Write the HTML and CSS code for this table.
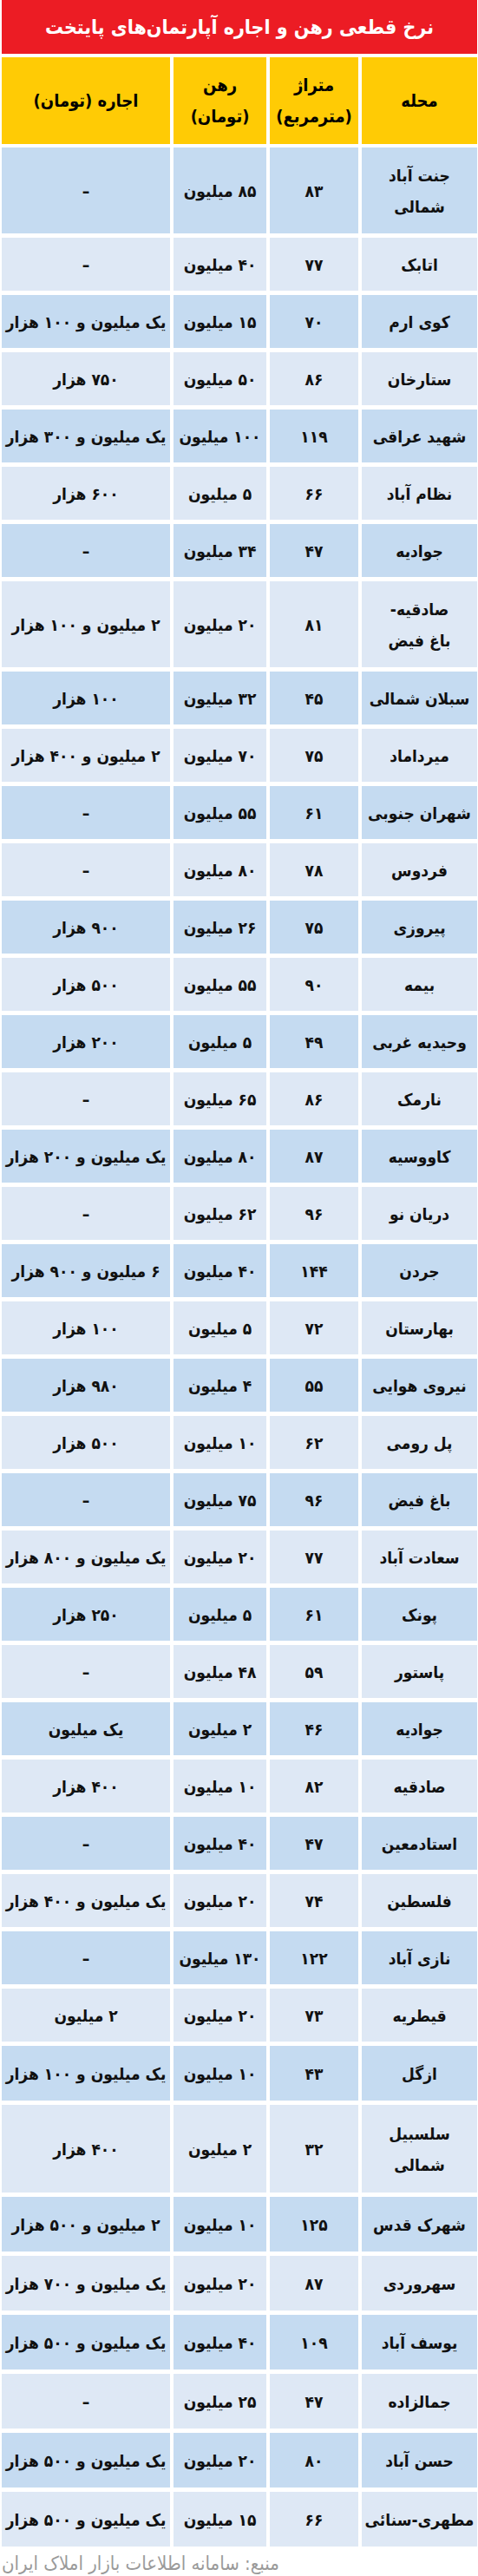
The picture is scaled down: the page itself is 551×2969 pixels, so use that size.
FILE: index.html
```html
<!DOCTYPE html>
<html lang="fa" dir="rtl">
<head>
<meta charset="utf-8">
<title>نرخ قطعی رهن و اجاره آپارتمان‌های پایتخت</title>
<link rel="stylesheet" href="styles.css">
</head>
<body>
<div class="page">
  <div class="title">نرخ قطعی رهن و اجاره آپارتمان&zwnj;های پایتخت</div>
  <div class="row head">
    <div class="cell">محله</div>
    <div class="cell">متراژ<br>(مترمربع)</div>
    <div class="cell">رهن<br>(تومان)</div>
    <div class="cell">اجاره (تومان)</div>
  </div>
  <div class="rows">
    <div class="row tall"><div class="cell">جنت آباد<br>شمالی</div><div class="cell">۸۳</div><div class="cell">۸۵ میلیون</div><div class="cell">–</div></div>
    <div class="row"><div class="cell">اتابک</div><div class="cell">۷۷</div><div class="cell">۴۰ میلیون</div><div class="cell">–</div></div>
    <div class="row"><div class="cell">کوی ارم</div><div class="cell">۷۰</div><div class="cell">۱۵ میلیون</div><div class="cell">یک میلیون و ۱۰۰ هزار</div></div>
    <div class="row"><div class="cell">ستارخان</div><div class="cell">۸۶</div><div class="cell">۵۰ میلیون</div><div class="cell">۷۵۰ هزار</div></div>
    <div class="row"><div class="cell">شهید عراقی</div><div class="cell">۱۱۹</div><div class="cell">۱۰۰ میلیون</div><div class="cell">یک میلیون و ۳۰۰ هزار</div></div>
    <div class="row"><div class="cell">نظام آباد</div><div class="cell">۶۶</div><div class="cell">۵ میلیون</div><div class="cell">۶۰۰ هزار</div></div>
    <div class="row"><div class="cell">جوادیه</div><div class="cell">۴۷</div><div class="cell">۳۴ میلیون</div><div class="cell">–</div></div>
    <div class="row tall"><div class="cell">صادقیه-<br>باغ فیض</div><div class="cell">۸۱</div><div class="cell">۲۰ میلیون</div><div class="cell">۲ میلیون و ۱۰۰ هزار</div></div>
    <div class="row"><div class="cell">سبلان شمالی</div><div class="cell">۴۵</div><div class="cell">۳۲ میلیون</div><div class="cell">۱۰۰ هزار</div></div>
    <div class="row"><div class="cell">میرداماد</div><div class="cell">۷۵</div><div class="cell">۷۰ میلیون</div><div class="cell">۲ میلیون و ۴۰۰ هزار</div></div>
    <div class="row"><div class="cell">شهران جنوبی</div><div class="cell">۶۱</div><div class="cell">۵۵ میلیون</div><div class="cell">–</div></div>
    <div class="row"><div class="cell">فردوس</div><div class="cell">۷۸</div><div class="cell">۸۰ میلیون</div><div class="cell">–</div></div>
    <div class="row"><div class="cell">پیروزی</div><div class="cell">۷۵</div><div class="cell">۲۶ میلیون</div><div class="cell">۹۰۰ هزار</div></div>
    <div class="row"><div class="cell">بیمه</div><div class="cell">۹۰</div><div class="cell">۵۵ میلیون</div><div class="cell">۵۰۰ هزار</div></div>
    <div class="row"><div class="cell">وحیدیه غربی</div><div class="cell">۴۹</div><div class="cell">۵ میلیون</div><div class="cell">۲۰۰ هزار</div></div>
    <div class="row"><div class="cell">نارمک</div><div class="cell">۸۶</div><div class="cell">۶۵ میلیون</div><div class="cell">–</div></div>
    <div class="row"><div class="cell">کاووسیه</div><div class="cell">۸۷</div><div class="cell">۸۰ میلیون</div><div class="cell">یک میلیون و ۲۰۰ هزار</div></div>
    <div class="row"><div class="cell">دریان نو</div><div class="cell">۹۶</div><div class="cell">۶۲ میلیون</div><div class="cell">–</div></div>
    <div class="row"><div class="cell">جردن</div><div class="cell">۱۴۴</div><div class="cell">۴۰ میلیون</div><div class="cell">۶ میلیون و ۹۰۰ هزار</div></div>
    <div class="row"><div class="cell">بهارستان</div><div class="cell">۷۲</div><div class="cell">۵ میلیون</div><div class="cell">۱۰۰ هزار</div></div>
    <div class="row"><div class="cell">نیروی هوایی</div><div class="cell">۵۵</div><div class="cell">۴ میلیون</div><div class="cell">۹۸۰ هزار</div></div>
    <div class="row"><div class="cell">پل رومی</div><div class="cell">۶۲</div><div class="cell">۱۰ میلیون</div><div class="cell">۵۰۰ هزار</div></div>
    <div class="row"><div class="cell">باغ فیض</div><div class="cell">۹۶</div><div class="cell">۷۵ میلیون</div><div class="cell">–</div></div>
    <div class="row"><div class="cell">سعادت آباد</div><div class="cell">۷۷</div><div class="cell">۲۰ میلیون</div><div class="cell">یک میلیون و ۸۰۰ هزار</div></div>
    <div class="row"><div class="cell">پونک</div><div class="cell">۶۱</div><div class="cell">۵ میلیون</div><div class="cell">۲۵۰ هزار</div></div>
    <div class="row"><div class="cell">پاستور</div><div class="cell">۵۹</div><div class="cell">۴۸ میلیون</div><div class="cell">–</div></div>
    <div class="row"><div class="cell">جوادیه</div><div class="cell">۴۶</div><div class="cell">۲ میلیون</div><div class="cell">یک میلیون</div></div>
    <div class="row"><div class="cell">صادقیه</div><div class="cell">۸۲</div><div class="cell">۱۰ میلیون</div><div class="cell">۴۰۰ هزار</div></div>
    <div class="row"><div class="cell">استادمعین</div><div class="cell">۴۷</div><div class="cell">۴۰ میلیون</div><div class="cell">–</div></div>
    <div class="row"><div class="cell">فلسطین</div><div class="cell">۷۴</div><div class="cell">۲۰ میلیون</div><div class="cell">یک میلیون و ۴۰۰ هزار</div></div>
    <div class="row"><div class="cell">نازی آباد</div><div class="cell">۱۲۲</div><div class="cell">۱۳۰ میلیون</div><div class="cell">–</div></div>
    <div class="row"><div class="cell">قیطریه</div><div class="cell">۷۳</div><div class="cell">۲۰ میلیون</div><div class="cell">۲ میلیون</div></div>
    <div class="row lg"><div class="cell">ازگل</div><div class="cell">۴۳</div><div class="cell">۱۰ میلیون</div><div class="cell">یک میلیون و ۱۰۰ هزار</div></div>
    <div class="row lg tall"><div class="cell">سلسبیل<br>شمالی</div><div class="cell">۳۲</div><div class="cell">۲ میلیون</div><div class="cell">۴۰۰ هزار</div></div>
    <div class="row lg"><div class="cell">شهرک قدس</div><div class="cell">۱۲۵</div><div class="cell">۱۰ میلیون</div><div class="cell">۲ میلیون و ۵۰۰ هزار</div></div>
    <div class="row lg"><div class="cell">سهروردی</div><div class="cell">۸۷</div><div class="cell">۲۰ میلیون</div><div class="cell">یک میلیون و ۷۰۰ هزار</div></div>
    <div class="row lg"><div class="cell">یوسف آباد</div><div class="cell">۱۰۹</div><div class="cell">۴۰ میلیون</div><div class="cell">یک میلیون و ۵۰۰ هزار</div></div>
    <div class="row lg"><div class="cell">جمالزاده</div><div class="cell">۴۷</div><div class="cell">۲۵ میلیون</div><div class="cell">–</div></div>
    <div class="row lg"><div class="cell">حسن آباد</div><div class="cell">۸۰</div><div class="cell">۲۰ میلیون</div><div class="cell">یک میلیون و ۵۰۰ هزار</div></div>
    <div class="row lg"><div class="cell">مطهری-سنائی</div><div class="cell">۶۶</div><div class="cell">۱۵ میلیون</div><div class="cell">یک میلیون و ۵۰۰ هزار</div></div>
  </div>
  <div class="source">منبع: سامانه اطلاعات بازار املاک ایران</div>
</div>
</body>
</html>
```

FILE: styles.css
```css
html, body {
  margin: 0;
  padding: 0;
  background: #ffffff;
}

body {
  width: 551px;
  font-family: "DejaVu Sans Condensed", "DejaVu Sans", sans-serif;
  color: #111111;
}

.page {
  padding: 0 1px 0 2px;
}

.title {
  height: 62px;
  background: #ec1c24;
  color: #ffffff;
  font-size: 23px;
  font-weight: bold;
  display: flex;
  align-items: center;
  justify-content: center;
  margin-bottom: 4px;
}

.row {
  display: grid;
  grid-template-columns: 133px 102px 107px 194px;
  column-gap: 4px;
  height: 61px;
}

.row.tall {
  height: 99px;
}

.row.lg {
  height: 63px;
}

.row.lg.tall {
  height: 101px;
}

.row.head {
  height: 100px;
  margin-bottom: 4px;
}

.cell {
  display: flex;
  align-items: center;
  justify-content: center;
  text-align: center;
  font-size: 19px;
  font-weight: bold;
  line-height: 36px;
  white-space: nowrap;
  background: #dee8f5;
}

.head .cell {
  background: #ffcb05;
  color: #000000;
  font-size: 20px;
}

.rows {
  display: flex;
  flex-direction: column;
  gap: 5px;
}

.rows .row:nth-child(odd) .cell {
  background: #c5dbf1;
}

.source {
  margin-top: 3px;
  font-size: 22px;
  line-height: 34px;
  color: #9a9a9a;
  text-align: left;
  white-space: nowrap;
}
```
